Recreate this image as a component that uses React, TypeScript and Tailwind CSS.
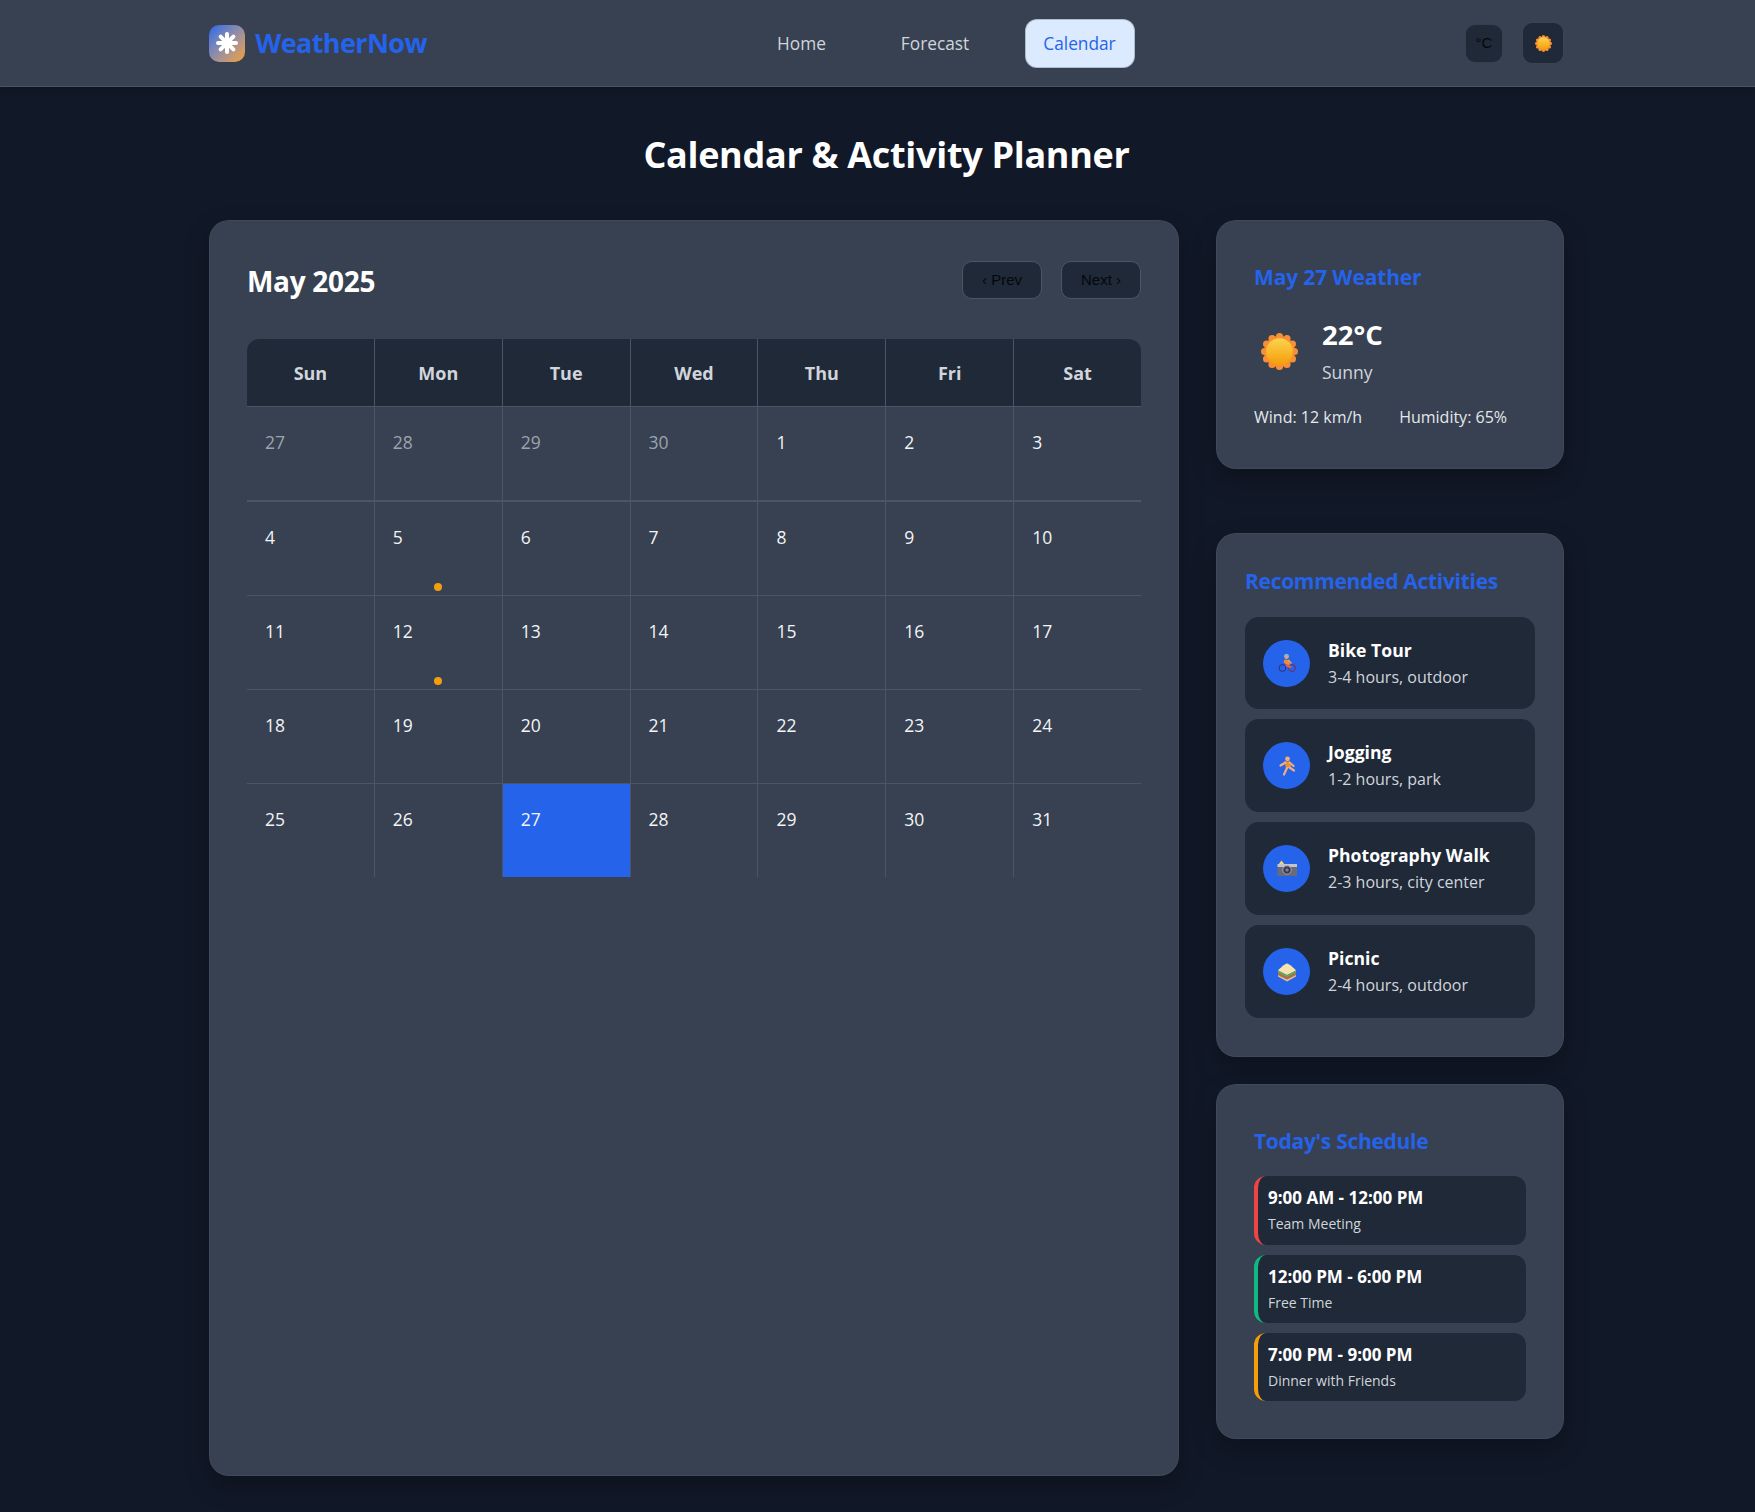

const FONT = "font-['Open_Sans','Noto_Sans',sans-serif]";

function Sun({ size }: { size: number }) {
  const bumps = Array.from({ length: 12 }, (_, i) => (i * Math.PI) / 6);
  return (
    <svg width={size} height={size} viewBox="0 0 36 36">
      <defs>
        <linearGradient id={`s${size}`} x1="0" y1="0" x2="0" y2="1">
          <stop offset="0" stopColor="#fcd34d" />
          <stop offset="1" stopColor="#f59e0b" />
        </linearGradient>
      </defs>
      {bumps.map((a, i) => (
        <circle key={i} cx={18 + 14.5 * Math.cos(a)} cy={18 + 14.5 * Math.sin(a)} r="3.5" fill="#f98f33" />
      ))}
      <circle cx="18" cy="18" r="15" fill="#f98f33" />
      <circle cx="18" cy="18" r="13" fill={`url(#s${size})`} />
    </svg>
  );
}

function Logo() {
  return (
    <div className="flex h-[37px] w-[37px] items-center justify-center rounded-[10px] bg-gradient-to-br from-[#2563eb] to-[#f59e0b]">
      <svg width="24" height="24" viewBox="0 0 24 24" stroke="white" strokeWidth="4" strokeLinecap="round">
        <path d="M12 3V21M3 12H21M5.6 5.6L18.4 18.4M18.4 5.6L5.6 18.4" />
      </svg>
    </div>
  );
}

function Bike() {
  return (
    <svg width="22" height="22" viewBox="0 0 22 22">
      <circle cx="6.5" cy="16" r="3.4" fill="none" stroke="#3b2a7a" strokeWidth="1" />
      <circle cx="16" cy="16" r="3.4" fill="none" stroke="#7a2a4a" strokeWidth="1" />
      <circle cx="10.5" cy="4.5" r="2.4" fill="#e7a56c" />
      <path d="M8.2 4.2a2.4 2.4 0 0 1 4.6 -.6L8.6 5.2z" fill="#6fc0e0" />
      <path d="M8.5 7.5L13.5 8L14 13L10 12.5L7.5 10z" fill="#f28a33" />
      <path d="M10 12L16 14.5L14 16.2L9.5 14z" fill="#e0684a" />
      <path d="M12 8L15.5 11.5" stroke="#e7a56c" strokeWidth="1.6" />
    </svg>
  );
}

function Runner() {
  return (
    <svg width="22" height="22" viewBox="0 0 22 22" fill="none">
      <circle cx="11.5" cy="3.8" r="2.4" fill="#eeb07a" />
      <path d="M8.5 6.5L14 6.5L15 12.5L10 13.5z" fill="#f28a33" />
      <path d="M9.5 7.5L4.5 10.5M13.5 7.5L17.5 11M11 13L8 19.5M13.5 12.5L18 15.5" stroke="#eeb07a" strokeWidth="2.2" strokeLinecap="round" />
    </svg>
  );
}

function Camera() {
  return (
    <svg width="22" height="22" viewBox="0 0 22 22">
      <path d="M2.5 6.5L5.5 2.5L8.5 6.5z" fill="#f7d774" />
      <rect x="1.5" y="6" width="19.5" height="12" rx="1" fill="#6b6a78" />
      <rect x="1.5" y="6" width="19.5" height="3" fill="#c2c5cf" />
      <circle cx="11" cy="12" r="4.2" fill="#3a3845" stroke="#a5a7b5" strokeWidth="1" />
      <circle cx="11" cy="12" r="1.7" fill="#6b7fb8" />
    </svg>
  );
}

function Sandwich() {
  return (
    <svg width="22" height="22" viewBox="0 0 22 22">
      <path d="M2 9.5C3 8 9 2.5 11 2.5C13 2.5 19 8 20 9.5L11 14z" fill="#f8e3b0" />
      <path d="M2 9.5L11 14L20 9.5V12L11 16.5L2 12z" fill="#6aa84f" />
      <path d="M2 12L11 16.5L20 12V14L11 18.5L2 14z" fill="#c9653f" />
      <path d="M2 14L11 18.5L20 14V15.5L11 20.5L2 15.5z" fill="#e8c080" />
    </svg>
  );
}

const heads = ["Sun", "Mon", "Tue", "Wed", "Thu", "Fri", "Sat"];
const prev = [27, 28, 29, 30];
const days = Array.from({ length: 31 }, (_, i) => i + 1);

const activities = [
  { t: "Bike Tour", s: "3-4 hours, outdoor", I: Bike, cls: "h-[92px]" },
  { t: "Jogging", s: "1-2 hours, park", I: Runner, cls: "h-[93px]" },
  { t: "Photography Walk", s: "2-3 hours, city center", I: Camera, cls: "h-[93px]" },
  { t: "Picnic", s: "2-4 hours, outdoor", I: Sandwich, cls: "h-[93px]" },
];

const schedule = [
  { t: "9:00 AM - 12:00 PM", s: "Team Meeting", c: "border-l-[#ef4444]", h: "h-[69px]" },
  { t: "12:00 PM - 6:00 PM", s: "Free Time", c: "border-l-[#10b981]", h: "h-[68px]" },
  { t: "7:00 PM - 9:00 PM", s: "Dinner with Friends", c: "border-l-[#f59e0b]", h: "h-[68px]" },
];

const cardCls =
  "rounded-[20px] border border-[#4b5563]/40 bg-[#374151] shadow-[0_10px_25px_rgba(0,0,0,0.25)]";

export default function App() {
  return (
    <div className={`${FONT} min-h-[1512px] bg-[#111827] text-[#f3f4f6]`}>
      <header className="h-[87px] border-b border-[#4b5563] bg-[#374151] shadow-[0_2px_8px_rgba(0,0,0,0.2)]">
        <div className="ml-[209px] flex h-[86px] w-[1355px] items-center justify-between">
          <div className="flex w-[218px] items-center gap-[10px]">
            <Logo />
            <span className="pt-[1px] text-[27px] font-bold tracking-[-0.6px] text-[#2563eb]">WeatherNow</span>
          </div>
          <nav className="flex w-[377px] items-center justify-between text-[17.3px] text-[#d1d5db]">
            <a className="flex h-[49px] w-[88px] items-center justify-center pt-[1px]">Home</a>
            <a className="flex h-[49px] w-[107px] items-center justify-center pt-[1px]">Forecast</a>
            <a className="flex h-[49px] w-[110px] items-center justify-center rounded-xl border border-[#4b5563]/30 bg-[#dbeafe] pt-[1px] text-[#2563eb]">Calendar</a>
          </nav>
          <div className="flex items-center gap-[19px]">
            <button className="flex h-[39px] w-[38px] items-center justify-center rounded-[10px] border border-[#4b5563]/50 bg-[#1f2937] font-['Liberation_Sans',sans-serif] text-[15px] text-[#05070c]">°C</button>
            <button className="flex h-[42px] w-[42px] items-center justify-center rounded-[10px] border border-[#4b5563]/60 bg-[#1f2937]">
              <Sun size={17} />
            </button>
          </div>
        </div>
      </header>

      <h1 className="mt-[44px] ml-[209px] w-[1355px] text-center text-[36px] leading-[48px] font-bold tracking-[-0.3px] text-white">
        Calendar &amp; Activity Planner
      </h1>

      <main className="mt-[41px] ml-[209px] grid w-[1355px] grid-cols-[970px_348px] items-start gap-[37px]">
        <section className={`${cardCls} h-[1256px] px-[37px] pt-[40px]`}>
          <div className="flex h-[38px] items-center justify-between">
            <h2 className="pt-[2px] text-[28px] font-bold tracking-[-0.3px] text-white">May 2025</h2>
            <div className="flex gap-[19px] font-['Liberation_Sans',sans-serif] text-[15px] text-[#05070c]">
              <button className="h-[38px] w-[80px] rounded-[10px] border border-[#4b5563] bg-[#1f2937]">‹ Prev</button>
              <button className="h-[38px] w-[80px] rounded-[10px] border border-[#4b5563] bg-[#1f2937]">Next ›</button>
            </div>
          </div>

          <div className="mt-[40px] grid grid-cols-7 gap-px overflow-hidden rounded-t-xl bg-[#4b5563]">
            {heads.map((h) => (
              <div key={h} className="flex h-[67px] items-center justify-center bg-[#1f2937] pt-[1px] text-[18px] font-bold text-[#d1d5db]">
                {h}
              </div>
            ))}
            {prev.map((d) => (
              <div key={`p${d}`} className="h-[94px] border-b border-[#4b5563] bg-[#374151] pt-[19px] pl-[18px] text-[17.5px] leading-[32px] text-[#9ca3af]">
                {d}
              </div>
            ))}
            {days.map((d) => {
              const today = d === 27;
              const dot = d === 5 || d === 12;
              return (
                <div
                  key={d}
                  className={`relative pt-[19px] pl-[18px] text-[17.5px] leading-[32px] text-[#f3f4f6] ${d <= 3 ? "h-[94px] border-b border-[#4b5563]" : "h-[93px]"} ${today ? "bg-[#2563eb]" : "bg-[#374151]"}`}
                >
                  {d}
                  {dot && (
                    <span className="absolute bottom-[4px] left-1/2 h-2 w-2 -translate-x-1/2 rounded-full bg-[#f59e0b]" />
                  )}
                </div>
              );
            })}
          </div>
        </section>

        <aside className="flex flex-col">
          <section className={`${cardCls} h-[249px] px-[37px] pt-[39px]`}>
            <h3 className="text-[21px] leading-[34px] font-bold tracking-[-0.15px] text-[#2563eb]">May 27 Weather</h3>
            <div className="mt-[23px] flex items-center gap-[24px]">
              <div className="ml-[7px]"><Sun size={37} /></div>
              <div>
                <div className="text-[27.5px] leading-[36px] font-bold text-white">22°C</div>
                <div className="mt-[6px] text-[17.5px] leading-[26px] text-[#d1d5db]">Sunny</div>
              </div>
            </div>
            <div className="mt-[20px] flex gap-[37px] text-[16px] leading-[24px] text-[#e5e7eb]">
              <span>Wind: 12 km/h</span>
              <span>Humidity: 65%</span>
            </div>
          </section>

          <section className={`${cardCls} mt-[64px] h-[524px] px-[28px] pt-[30px]`}>
            <h3 className="text-[21px] leading-[34px] font-bold tracking-[-0.3px] text-[#2563eb]">Recommended Activities</h3>
            <div className="mt-[19px] flex flex-col gap-[10px]">
              {activities.map(({ t, s, I, cls }) => (
                <div key={t} className={`flex items-center gap-[18px] rounded-[14px] bg-[#1f2937] pl-[18px] ${cls}`}>
                  <div className="flex h-[47px] w-[47px] items-center justify-center rounded-full bg-[#2563eb]">
                    <I />
                  </div>
                  <div>
                    <div className="text-[17.6px] leading-[27px] font-bold text-white">{t}</div>
                    <div className="text-[16px] leading-[26px] text-[#d1d5db]">{s}</div>
                  </div>
                </div>
              ))}
            </div>
          </section>

          <section className={`${cardCls} mt-[27px] h-[355px] px-[37px] pt-[39px]`}>
            <h3 className="text-[21px] leading-[34px] font-bold tracking-[-0.3px] text-[#2563eb]">Today's Schedule</h3>
            <div className="mt-[18px] flex flex-col gap-[10px]">
              {schedule.map((i) => (
                <div key={i.t} className={`rounded-xl border-l-[4px] bg-[#1f2937] pl-[10px] ${i.c} ${i.h}`}>
                  <div className="pt-[9px] text-[17px] leading-[26px] font-bold text-white">{i.t}</div>
                  <div className="pt-[1px] text-[14px] leading-[24px] text-[#d1d5db]">{i.s}</div>
                </div>
              ))}
            </div>
          </section>
        </aside>
      </main>
    </div>
  );
}
